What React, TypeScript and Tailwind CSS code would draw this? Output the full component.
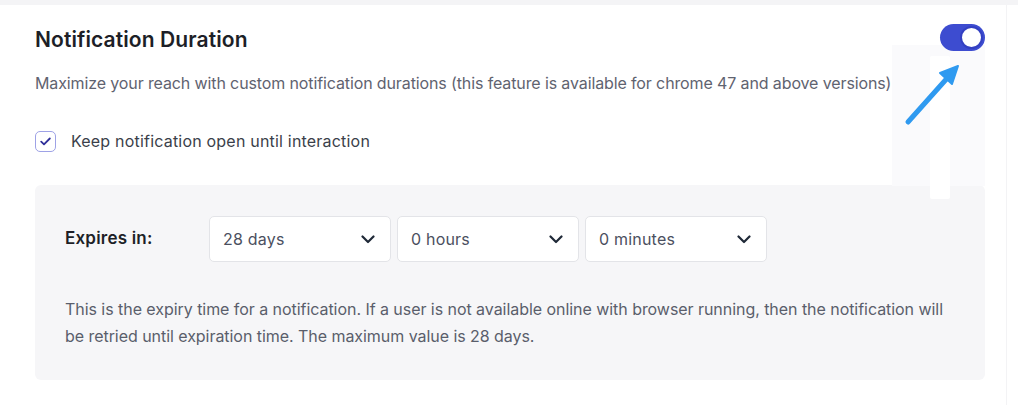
import React from "react";

function Chevron() {
  return (
    <svg width="14" height="9" viewBox="0 0 14 9" fill="none" className="shrink-0">
      <path d="M1.5 1.5L7 7L12.5 1.5" stroke="#1f2937" strokeWidth="2.2" strokeLinecap="round" strokeLinejoin="round" />
    </svg>
  );
}

function Select({ label }: { label: string }) {
  return (
    <div className="w-[182px] h-[46px] bg-white border border-[#e3e4e8] rounded-[5px] flex items-center justify-between pl-[13px] pr-[15px]">
      <span className="text-[16px] text-[#4b5060] tracking-[0.2px]">{label}</span>
      <Chevron />
    </div>
  );
}

export default function App() {
  return (
    <div
      className="relative w-[1018px] h-[405px] bg-white overflow-hidden"
      style={{ fontFamily: "Inter, 'Noto Sans', sans-serif" }}
    >
      <div className="h-[5px] bg-[#f4f4f6]" />
      <div className="pl-[35px] pr-[33px] pt-[21px]">
        <div className="flex items-start justify-between">
          <h1 className="text-[21px] leading-[28px] font-semibold text-[#1d1f27] tracking-[0.1px]">Notification Duration</h1>
          <div className="relative z-10 -mt-[2px] w-[45px] h-[27px] rounded-full bg-[#3d4cd0] flex items-center justify-end pr-[2px]">
            <div className="w-[23px] h-[23px] rounded-full bg-white border-[2px] border-[#3340c2]" />
          </div>
        </div>
        <div className="mt-[18px] w-[857px] overflow-hidden whitespace-nowrap text-[16px] leading-[22px] text-[#5f6370] tracking-[-0.12px]">
          Maximize your reach with custom notification durations (this feature is available for chrome 47 and above versions)
        </div>
        <div className="mt-[35px] flex items-center gap-[15px]">
          <div className="w-[21px] h-[21px] rounded-[5px] border-[1.5px] border-[#9ea2e6] bg-white flex items-center justify-center">
            <svg width="11" height="9" viewBox="0 0 11 9" fill="none">
              <path d="M1.2 4.6L4 7.3L9.8 1.5" stroke="#2f2f9a" strokeWidth="1.8" strokeLinecap="round" strokeLinejoin="round" />
            </svg>
          </div>
          <span className="text-[16px] text-[#3b3f4a] tracking-[0.2px]">Keep notification open until interaction</span>
        </div>
      </div>

      <div className="mt-[32px] ml-[35px] w-[950px] h-[195px] bg-[#f6f6f8] rounded-[6px] pl-[30px] pt-[31px]">
        <div className="flex items-center">
          <span className="w-[144px] text-[17px] font-semibold text-[#1d1f27] tracking-[0.2px]">Expires in:</span>
          <div className="flex gap-[6px]">
            <Select label="28 days" />
            <Select label="0 hours" />
            <Select label="0 minutes" />
          </div>
        </div>
        <p className="mt-[34px] w-[885px] text-[16px] leading-[27px] text-[#5a5e6b] tracking-[-0.05px]">
          This is the expiry time for a notification. If a user is not available online with browser running, then the notification will be retried until expiration time. The maximum value is 28 days.
        </p>
      </div>

      {/* editing overlay artifacts on the right */}
      <div className="absolute left-[892px] top-[45px] w-[93px] h-[141px] bg-[#fafafc]" />
      <div className="absolute left-[930px] top-[56px] w-[20px] h-[143px] bg-white rounded-[2px]" />
      <div className="absolute left-[1006px] top-[5px] w-[1px] h-[400px] bg-[#f3f3f5]" />

      {/* arrow */}
      <svg className="absolute left-[900px] top-[60px]" width="66" height="70" viewBox="0 0 66 70" fill="none">
        <path d="M8 62L50 15" stroke="#2f9af0" strokeWidth="5" strokeLinecap="round" />
        <path d="M58 6L40 13L52 24Z" fill="#2f9af0" stroke="#2f9af0" strokeWidth="2" strokeLinejoin="round" />
      </svg>
    </div>
  );
}
